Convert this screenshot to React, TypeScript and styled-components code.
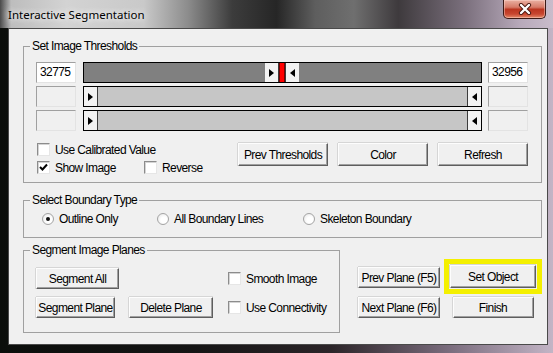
import React from "react";
import styled, { createGlobalStyle } from "styled-components";

const GlobalStyle = createGlobalStyle`
  html, body { margin: 0; padding: 0; background: #000; }
  body { font-family: "Liberation Sans", Arial, sans-serif; }
`;

const Window = styled.div`
  width: 553px;
  height: 353px;
  display: flex;
  flex-direction: column;
  overflow: hidden;
  background: linear-gradient(90deg, #0b0e0b 0%, #151515 35%, #2c2529 60%, #7d6f80 82%, #c3b5c6 100%);
`;

const TitleBar = styled.div`
  height: 28px;
  flex: none;
  display: flex;
  align-items: flex-start;
  background: linear-gradient(
    90deg,
    #4a4a4a 0%,
    #bdbdbd 2%,
    #d3d3d3 12%,
    #c9c9c9 26%,
    #8c8c8c 34%,
    #3c3c3c 42%,
    #262626 50%,
    #5e5e5e 57%,
    #6f6f6f 64%,
    #3e3a3d 72%,
    #7a6f7c 84%,
    #b7a9ba 94%,
    #c9bccb 100%
  );
`;

const Title = styled.span`
  margin: 8px 0 0 8px;
  font: 11.5px/14px "Noto Sans", "Liberation Sans", sans-serif;
  color: #000;
  text-shadow: 0 0 6px #fff, 0 0 10px rgba(255, 255, 255, 0.8);
`;

const CloseButton = styled.div`
  width: 43px;
  height: 19px;
  margin: 0 7px 0 auto;
  box-sizing: border-box;
  border: 1px solid #3b1a16;
  border-top: none;
  border-radius: 0 0 5px 5px;
  background: linear-gradient(#eab0a2 0%, #d67a68 40%, #bb3520 52%, #c84630 78%, #e48a6a 100%);
  box-shadow: inset 0 0 0 1px rgba(255, 220, 210, 0.45);
  display: flex;
  align-items: center;
  justify-content: center;
`;

const Frame = styled.div`
  flex: 1;
  display: flex;
  padding: 0 9px 8px 8px;
`;

const Client = styled.div`
  flex: 1;
  display: flex;
  flex-direction: column;
  border: 1px solid #4a4a4a;
  background: #f0f0f0;
  padding: 10px 5px 0 14px;
  font-size: 12px;
  letter-spacing: -0.6px;
  color: #000;
`;

const Group = styled.fieldset<{ $mt?: number }>`
  margin: ${(p) => p.$mt ?? 0}px 0 0 0;
  padding: 0 0 0 6px;
  border: 1px solid #a0a0a0;
  min-width: 0;
  box-sizing: border-box;
`;

const Legend = styled.legend`
  padding: 0 2px;
  font-size: 12px;
  line-height: 14px;
`;

const ThresholdBody = styled.div`
  padding: 9px 13px 8px 6px;
`;

const SliderRows = styled.div`
  display: flex;
  flex-direction: column;
  gap: 3px;
`;

const SliderRow = styled.div`
  display: flex;
  align-items: center;
`;

const Field = styled.div<{ $empty?: boolean }>`
  width: 40px;
  height: 21px;
  flex: none;
  box-sizing: border-box;
  border: 1px solid;
  border-color: #a0a0a0 #e3e3e3 #e3e3e3 #a0a0a0;
  background: ${(p) => (p.$empty ? "#f0f0f0" : "#fff")};
  padding-left: 3px;
  line-height: 19px;
`;

const Track = styled.div`
  flex: 1;
  height: 21px;
  margin: 0 6px 0 7px;
  box-sizing: border-box;
  border: 1px solid #000;
  display: flex;
`;

const Fill = styled.div<{ $dark?: boolean; $w?: number }>`
  background: ${(p) => (p.$dark ? "#808080" : "#c6c6c6")};
  flex: ${(p) => (p.$w ? `0 0 ${p.$w}px` : "1")};
`;

const Thumb = styled.div<{ $dir: "left" | "right" }>`
  width: 14px;
  flex: none;
  box-sizing: border-box;
  background: #f2f2f2;
  display: flex;
  align-items: center;
  justify-content: center;
  ${(p) => (p.$dir === "right" ? "border-right: 1px solid #3c3c3c;" : "border-left: 1px solid #3c3c3c;")}

  &::before {
    content: "";
    border-top: 4px solid transparent;
    border-bottom: 4px solid transparent;
    ${(p) => (p.$dir === "right" ? "border-left: 5px solid #000;" : "border-right: 5px solid #000;")}
  }
`;

const Marker = styled.div`
  width: 6px;
  flex: none;
  box-sizing: border-box;
  background: #ff0000;
  border-left: 1px solid #7a0000;
  border-right: 1px solid #7a0000;
`;

const Options = styled.div`
  display: flex;
  align-items: flex-start;
  margin-top: 12px;
`;

const CheckColumn = styled.div`
  width: 197px;
  flex: none;
  display: flex;
  flex-direction: column;
  gap: 5px;
  padding-left: 1px;
`;

const CheckPair = styled.div`
  display: grid;
  grid-template-columns: 107px auto;
`;

const ButtonRow = styled.div`
  flex: 1;
  display: flex;
  justify-content: flex-end;
  gap: 10px;
`;

const Button = styled.button<{ $w: number; $h?: number }>`
  width: ${(p) => p.$w}px;
  height: ${(p) => p.$h ?? 21}px;
  flex: none;
  box-sizing: border-box;
  padding: 0;
  margin: 0;
  font: 12px "Liberation Sans", Arial, sans-serif;
  letter-spacing: -0.6px;
  color: #000;
  background: #f0f0f0;
  border: 1px solid;
  border-color: #fdfdfd #5e5e5e #5e5e5e #fdfdfd;
  box-shadow: inset -1px -1px 0 #a0a0a0, 0 -1px 0 #d6d6d6, -1px 0 0 #d6d6d6;
`;

const Label = styled.label`
  display: flex;
  align-items: center;
  gap: 5px;
  height: 13px;
  white-space: nowrap;
`;

const Box = styled.span`
  width: 13px;
  height: 13px;
  flex: none;
  box-sizing: border-box;
  background: #fff;
  border: 1px solid;
  border-color: #8c8c8c #e6e6e6 #e6e6e6 #8c8c8c;
  box-shadow: inset 1px 1px 0 #d4d4d4;
  display: flex;
  align-items: center;
  justify-content: center;
`;

const BoundaryBody = styled.div`
  padding: 5px 0 12px 12px;
  display: grid;
  grid-template-columns: 115px 146px auto;
`;

const Circle = styled.span`
  width: 12px;
  height: 12px;
  flex: none;
  box-sizing: border-box;
  border-radius: 50%;
  border: 1px solid #a4a4a4;
  background: radial-gradient(circle at 60% 60%, #ffffff 35%, #e2e2e2 100%);
  display: flex;
  align-items: center;
  justify-content: center;
`;

const Dot = styled.span`
  width: 4px;
  height: 4px;
  border-radius: 50%;
  background: #111;
`;

const BottomRow = styled.div`
  display: flex;
  align-items: flex-start;
  margin-top: 5px;
`;

const PlanesGroup = styled(Group)`
  width: 317px;
  flex: none;
`;

const PlanesBody = styled.div`
  padding: 11px 0 14px 6px;
  display: grid;
  grid-template-columns: 93px 99px auto;
  grid-template-rows: 21px 21px;
  row-gap: 8px;
  align-items: center;
`;

const NavGrid = styled.div`
  flex: none;
  margin: 16px 0 0 18px;
  display: grid;
  grid-template-columns: 82px 98px;
  grid-template-rows: 35px 21px;
  column-gap: 4px;
  row-gap: 3px;
`;

const Highlight = styled.div`
  border: 5px solid #f4f000;
  padding: 1px;
`;

const PrevPlane = styled(Button)`
  align-self: end;
  margin-bottom: 6px;
`;

const FinishButton = styled(Button)`
  justify-self: center;
`;

function Check({ checked, children }: { checked?: boolean; children: React.ReactNode }) {
  return (
    <Label>
      <Box>
        {checked && (
          <svg width="9" height="9" viewBox="0 0 9 9">
            <polyline points="1,4 3.5,6.5 8,1.5" fill="none" stroke="#000" strokeWidth="2" />
          </svg>
        )}
      </Box>
      {children}
    </Label>
  );
}

function Radio({ selected, children }: { selected?: boolean; children: React.ReactNode }) {
  return (
    <Label>
      <Circle>{selected && <Dot />}</Circle>
      {children}
    </Label>
  );
}

export default function App() {
  return (
    <>
      <GlobalStyle />
      <Window>
        <TitleBar>
          <Title>Interactive Segmentation</Title>
          <CloseButton>
            <svg width="14" height="12" viewBox="0 0 14 12">
              <path d="M3 2 L11 10 M11 2 L3 10" stroke="#4a1810" strokeWidth="4.2" strokeLinecap="round" />
              <path d="M3 2 L11 10 M11 2 L3 10" stroke="#fff" strokeWidth="2.4" strokeLinecap="round" />
            </svg>
          </CloseButton>
        </TitleBar>
        <Frame>
          <Client>
            <Group>
              <Legend>Set Image Thresholds</Legend>
              <ThresholdBody>
                <SliderRows>
                  <SliderRow>
                    <Field>32775</Field>
                    <Track>
                      <Fill $dark $w={181} />
                      <Thumb $dir="right" />
                      <Marker />
                      <Thumb $dir="left" />
                      <Fill $dark />
                    </Track>
                    <Field>32956</Field>
                  </SliderRow>
                  <SliderRow>
                    <Field $empty />
                    <Track>
                      <Thumb $dir="right" />
                      <Fill />
                      <Thumb $dir="left" />
                    </Track>
                    <Field $empty />
                  </SliderRow>
                  <SliderRow>
                    <Field $empty />
                    <Track>
                      <Thumb $dir="right" />
                      <Fill />
                      <Thumb $dir="left" />
                    </Track>
                    <Field $empty />
                  </SliderRow>
                </SliderRows>
                <Options>
                  <CheckColumn>
                    <Check>Use Calibrated Value</Check>
                    <CheckPair>
                      <Check checked>Show Image</Check>
                      <Check>Reverse</Check>
                    </CheckPair>
                  </CheckColumn>
                  <ButtonRow>
                    <Button $w={90} $h={23}>Prev Thresholds</Button>
                    <Button $w={90} $h={23}>Color</Button>
                    <Button $w={90} $h={23}>Refresh</Button>
                  </ButtonRow>
                </Options>
              </ThresholdBody>
            </Group>
            <Group $mt={10}>
              <Legend>Select Boundary Type</Legend>
              <BoundaryBody>
                <Radio selected>Outline Only</Radio>
                <Radio>All Boundary Lines</Radio>
                <Radio>Skeleton Boundary</Radio>
              </BoundaryBody>
            </Group>
            <BottomRow>
              <PlanesGroup>
                <Legend>Segment Image Planes</Legend>
                <PlanesBody>
                  <Button $w={83}>Segment All</Button>
                  <span />
                  <Check>Smooth Image</Check>
                  <Button $w={79}>Segment Plane</Button>
                  <Button $w={84}>Delete Plane</Button>
                  <Check>Use Connectivity</Check>
                </PlanesBody>
              </PlanesGroup>
              <NavGrid>
                <PrevPlane $w={82}>Prev Plane (F5)</PrevPlane>
                <Highlight>
                  <Button $w={86} $h={23}>Set Object</Button>
                </Highlight>
                <Button $w={82}>Next Plane (F6)</Button>
                <FinishButton $w={81}>Finish</FinishButton>
              </NavGrid>
            </BottomRow>
          </Client>
        </Frame>
      </Window>
    </>
  );
}
